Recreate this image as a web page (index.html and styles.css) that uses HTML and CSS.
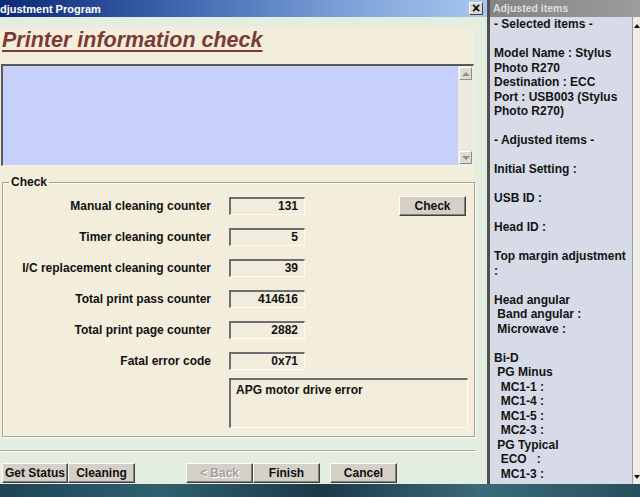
FILE: index.html
```html
<!DOCTYPE html>
<html lang="en">
<head>
    <meta charset="UTF-8">
    <title>Adjustment Program</title>
    <link rel="stylesheet" href="styles.css">
</head>
<body>
    <div class="desk">
        <div class="window">
            <div class="titlebar">
                <span class="title">djustment Program</span>
                <span class="close">&#215;</span>
            </div>
            <div class="body">
                <div class="page">
                    <h1 class="heading">Printer information check</h1>
                    <div class="infobox">
                        <div class="infobox-area"></div>
                        <div class="vscroll">
                            <span class="sbtn"><span class="arrow-up"></span></span>
                            <span class="sbtn"><span class="arrow-down"></span></span>
                        </div>
                    </div>
                    <fieldset class="group">
                        <legend>Check</legend>
                        <div class="row">
                            <span class="label">Manual cleaning counter</span>
                            <span class="field">131</span>
                            <button class="btn btn-check">Check</button>
                        </div>
                        <div class="row">
                            <span class="label">Timer cleaning counter</span>
                            <span class="field">5</span>
                        </div>
                        <div class="row">
                            <span class="label">I/C replacement cleaning counter</span>
                            <span class="field">39</span>
                        </div>
                        <div class="row">
                            <span class="label">Total print pass counter</span>
                            <span class="field">414616</span>
                        </div>
                        <div class="row">
                            <span class="label">Total print page counter</span>
                            <span class="field">2882</span>
                        </div>
                        <div class="row">
                            <span class="label">Fatal error code</span>
                            <span class="field">0x71</span>
                        </div>
                        <div class="errorbox">APG motor drive error</div>
                    </fieldset>
                </div>
                <div class="footer">
                    <div class="sep"></div>
                    <div class="buttons">
                        <button class="btn btn-status">Get Status</button>
                        <button class="btn">Cleaning</button>
                        <button class="btn btn-back">&lt; Back</button>
                        <button class="btn">Finish</button>
                        <button class="btn btn-cancel">Cancel</button>
                    </div>
                </div>
            </div>
        </div>

        <div class="side">
            <div class="side-title">Adjusted items</div>
            <div class="side-body">
                <div class="notes">- Selected items -

Model Name : Stylus Photo R270
Destination : ECC
Port : USB003 (Stylus Photo R270)

- Adjusted items -

Initial Setting :

USB ID :

Head ID :

Top margin adjustment :

Head angular
 Band angular :
 Microwave :

Bi-D
 PG Minus
  MC1-1 :
  MC1-4 :
  MC1-5 :
  MC2-3 :
 PG Typical
  ECO   :
  MC1-3 :</div>
                <div class="side-scroll">
                    <span class="arrow-up dark"></span>
                    <span class="arrow-down dark"></span>
                </div>
            </div>
        </div>
    </div>
    <div class="desktop"></div>
</body>
</html>
```

FILE: styles.css
```css
* {
    box-sizing: border-box;
}
body {
    margin: 0;
    width: 640px;
    height: 497px;
    overflow: hidden;
    font-family: 'Liberation Sans', Arial, sans-serif;
    font-size: 12px;
    font-weight: bold;
    color: #111;
    background: #1f3f4c;
}
.desk {
    display: flex;
    height: 484px;
}
.window {
    width: 487px;
    display: flex;
    flex-direction: column;
    background: #e3eee1;
}
.titlebar {
    height: 17px;
    display: flex;
    align-items: center;
    justify-content: space-between;
    padding-right: 4px;
    background: linear-gradient(to right, #0b2873, #3d63ad 35%, #7b9fd8 70%, #a9c8ee);
    color: #fff;
    font-size: 11px;
}
.close {
    width: 14px;
    height: 13px;
    background: #dcd8cc;
    border: 1px solid;
    border-color: #fff #404040 #404040 #fff;
    color: #000;
    font-size: 14px;
    line-height: 10px;
    text-align: center;
}
.body {
    flex: 1;
    display: flex;
    flex-direction: column;
    padding-top: 10px;
}
.page {
    width: 474px;
    background: #f3eddc;
    padding: 1px 0 1px 0;
}
.heading {
    margin: 0 0 0 2px;
    font-size: 21.5px;
    line-height: 24px;
    font-style: italic;
    color: #7b3a34;
    text-decoration: underline;
    text-decoration-thickness: 2px;
    text-underline-offset: 3px;
}
.infobox {
    margin: 12px 0 0 1px;
    width: 473px;
    height: 102px;
    display: flex;
    background: #c6d0fa;
    border-top: 2px solid #5a5a5a;
    border-left: 2px solid #5a5a5a;
    border-right: 1px solid #f4f2ea;
    border-bottom: 1px solid #f4f2ea;
}
.infobox-area {
    flex: 1;
}
.vscroll {
    width: 15px;
    display: flex;
    flex-direction: column;
    justify-content: space-between;
    padding: 1px;
    background: #ece9df;
}
.sbtn {
    width: 13px;
    height: 13px;
    display: flex;
    align-items: center;
    justify-content: center;
    background: #dedbd2;
    border: 1px solid;
    border-color: #fff #8e8e8e #8e8e8e #fff;
}
.arrow-up {
    width: 0;
    height: 0;
    border-left: 4px solid transparent;
    border-right: 4px solid transparent;
    border-bottom: 4px solid #8e8e8e;
}
.arrow-down {
    width: 0;
    height: 0;
    border-left: 4px solid transparent;
    border-right: 4px solid transparent;
    border-top: 4px solid #8e8e8e;
}
.group {
    margin: 9px 0 0 2px;
    width: 473px;
    padding: 8px 0 8px 0;
    border: 1px solid #a6a293;
    box-shadow: inset 1px 1px 0 #fff, 1px 1px 0 #fff;
}
.group legend {
    margin-left: 6px;
    padding: 0 2px;
    line-height: 14px;
    font-size: 12px;
}
.row {
    display: flex;
    align-items: center;
    height: 18px;
    margin-bottom: 13px;
}
.label {
    width: 208px;
    margin-right: 18px;
    text-align: right;
}
.field {
    width: 76px;
    height: 18px;
    padding-right: 6px;
    line-height: 15px;
    text-align: right;
    background: #f1ecdc;
    border-top: 2px solid #6e6e6e;
    border-left: 2px solid #6e6e6e;
    border-right: 1px solid #fbfaf4;
    border-bottom: 1px solid #fbfaf4;
}
.errorbox {
    margin: -5px 0 0 226px;
    width: 239px;
    height: 50px;
    padding: 3px 5px;
    background: #f1ecdc;
    border-top: 2px solid #6e6e6e;
    border-left: 2px solid #6e6e6e;
    border-right: 1px solid #fbfaf4;
    border-bottom: 1px solid #fbfaf4;
}
.btn {
    width: 67px;
    height: 20px;
    padding: 0;
    font-family: 'Liberation Sans', Arial, sans-serif;
    font-size: 12px;
    font-weight: bold;
    color: #111;
    background: #d4d0c8;
    border: 1px solid;
    border-color: #fff #404040 #404040 #fff;
    box-shadow: inset -1px -1px 0 #808080;
}
.btn-check {
    margin-left: auto;
    margin-right: 8px;
}
.footer {
    padding-top: 12px;
}
.sep {
    width: 475px;
    border-top: 1px solid #a3a69e;
    border-bottom: 1px solid #fff;
}
.buttons {
    display: flex;
    margin-top: 11px;
}
.btn-status {
    width: 66px;
    margin-left: 2px;
}
.btn-back {
    margin-left: 51px;
    color: #a0a0a0;
    text-shadow: 1px 1px 0 #fff;
}
.btn-cancel {
    margin-left: 10px;
}
.side {
    flex: 1;
    display: flex;
    flex-direction: column;
    border-left: 3px solid #505050;
}
.side-title {
    height: 17px;
    padding-left: 3px;
    line-height: 16px;
    font-size: 10.5px;
    color: #dedede;
    background: linear-gradient(to right, #848484, #9c9c9c);
}
.side-body {
    flex: 1;
    display: flex;
    background: #d6dbe7;
}
.notes {
    flex: 1;
    padding: 0 3px 0 4px;
    line-height: 14.5px;
    white-space: pre-wrap;
    color: #141414;
}
.side-scroll {
    width: 8px;
    display: flex;
    flex-direction: column;
    justify-content: space-between;
    align-items: center;
    padding: 7px 0 5px 0;
    background: #eeede6;
    border-left: 1px solid #9e9e9e;
}
.arrow-up.dark {
    border-bottom-color: #111;
    border-left-width: 3px;
    border-right-width: 3px;
}
.arrow-down.dark {
    border-top-color: #111;
    border-left-width: 3px;
    border-right-width: 3px;
}
.desktop {
    height: 13px;
    background: linear-gradient(to right, #1e4456, #2f6070 25%, #1b3947 50%, #3b6a78 75%, #27505e);
}
```
